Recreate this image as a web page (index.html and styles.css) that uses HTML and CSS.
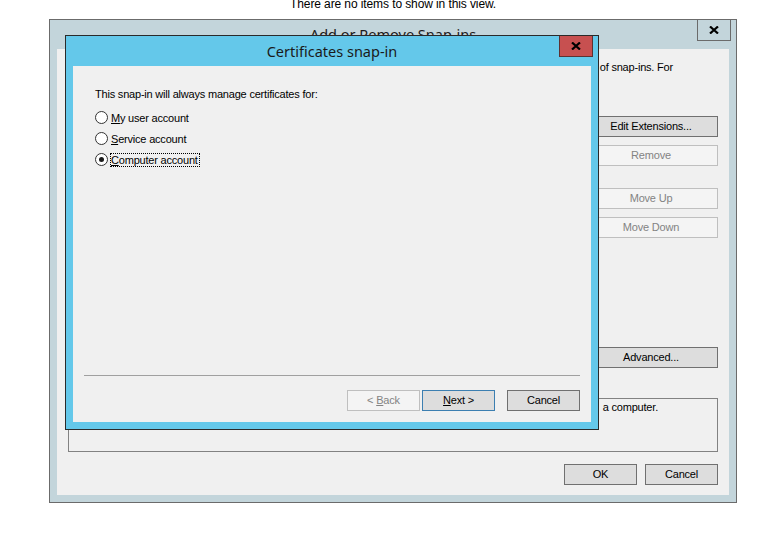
FILE: index.html
```html
<!DOCTYPE html>
<html lang="en">
<head>
<meta charset="utf-8">
<title>Certificates snap-in</title>
<link rel="stylesheet" href="styles.css">
</head>
<body>
<div class="desktop">
  <div class="bgmsg"><span>There are no items to show in this view.</span></div>

  <div class="win outer">
    <div class="titlebar outer-title">
      <span class="title">Add or Remove Snap-ins</span>
      <button class="cap-close" aria-label="Close">
        <svg width="10" height="8" viewBox="0 0 10 8"><path d="M1 0.5 L9 7.5 M9 0.5 L1 7.5" stroke="#000" stroke-width="2.2" fill="none"/></svg>
      </button>
    </div>
    <div class="client outer-client">
      <div class="intro">
        <span class="intro-l1">of snap-ins. For</span>
      </div>
      <div class="middle">
        <div class="lists">
          <div class="listbox"></div>
          <div class="listbox"></div>
        </div>
        <div class="side">
          <button class="btn">Edit Extensions...</button>
          <button class="btn gap8" disabled>Remove</button>
          <button class="btn gap22" disabled>Move Up</button>
          <button class="btn gap8" disabled>Move Down</button>
          <button class="btn push">Advanced...</button>
        </div>
      </div>
      <div class="desc">
        <span class="desc-text">a computer.</span>
      </div>
      <div class="footer">
        <button class="btn">OK</button>
        <button class="btn">Cancel</button>
      </div>
    </div>
  </div>

  <div class="win dialog">
    <div class="titlebar dlg-title">
      <span class="title">Certificates snap-in</span>
      <button class="cap-close red" aria-label="Close">
        <svg width="10" height="8" viewBox="0 0 10 8"><path d="M1 0.5 L9 7.5 M9 0.5 L1 7.5" stroke="#000" stroke-width="2.2" fill="none"/></svg>
      </button>
    </div>
    <div class="client dlg-client">
      <div class="content">
        <div class="prompt">This snap-in will always manage certificates for:</div>
        <div class="radios">
          <label class="radio"><span class="circle"></span><span class="lbl"><u>M</u>y user account</span></label>
          <label class="radio"><span class="circle"></span><span class="lbl"><u>S</u>ervice account</span></label>
          <label class="radio"><span class="circle checked"></span><span class="lbl focus"><u>C</u>omputer account</span></label>
        </div>
      </div>
      <div class="sep"></div>
      <div class="buttons">
        <button class="btn" disabled>&lt; <u>B</u>ack</button>
        <button class="btn default"><u>N</u>ext &gt;</button>
        <button class="btn cancel">Cancel</button>
      </div>
    </div>
  </div>
</div>
</body>
</html>
```

FILE: styles.css
```css
* { box-sizing: border-box; }
html, body { margin: 0; padding: 0; }
body {
  background: #ffffff;
  font-family: "Liberation Sans", Arial, sans-serif;
  font-size: 11px;
  letter-spacing: -0.2px;
  color: #000;
  width: 765px;
  height: 553px;
  overflow: hidden;
}
.desktop { position: relative; width: 765px; height: 553px; }

.bgmsg { height: 19px; overflow: hidden; padding-left: 290px; }
.bgmsg span { display: block; margin-top: -2px; line-height: 13px; font-size: 12px; letter-spacing: -0.1px; white-space: nowrap; }

/* windows */
.win { display: flex; flex-direction: column; }
.titlebar {
  display: grid;
  grid-template-columns: 1fr auto 1fr;
  align-items: start;
}
.title {
  grid-column: 2;
  font-family: "Noto Sans", "Open Sans", sans-serif;
  font-size: 14.5px;
  letter-spacing: 0;
  color: #1a1a1a;
  white-space: nowrap;
}
.cap-close {
  grid-column: 3;
  justify-self: end;
  width: 34px;
  height: 21px;
  margin: 0 5px 0 0;
  padding: 0;
  background: transparent;
  border: 1px solid #6b6b6b;
  border-top: none;
  display: flex;
  align-items: center;
  justify-content: center;
}
.cap-close svg { display: block; }
.cap-close.red { background: #c75050; border-color: #5e3131; }

.outer {
  margin-left: 49px;
  width: 688px;
  height: 484px;
  border: 1px solid #6b6b6b;
  background: #c3d5db;
}
.outer-title { height: 29px; }
.outer-title .title { line-height: 28px; }
.client { background: #f0f0f0; }
.outer-client {
  flex: 1;
  margin: 0 7px 7px;
  padding: 0 11px;
  display: flex;
  flex-direction: column;
}
.intro { margin-top: 12px; line-height: 13px; height: 26px; display: flex; justify-content: flex-end; padding-right: 45px; }
.intro-l1 { white-space: nowrap; }
.middle { display: flex; gap: 8px; margin-top: 29px; }
.lists { flex: 1; display: flex; gap: 60px; }
.listbox { flex: 1; height: 252px; border: 1px solid #828282; background: #fff; }
.side { width: 134px; display: flex; flex-direction: column; }
.side .btn { width: 100%; }
.gap8 { margin-top: 8px; }
.gap22 { margin-top: 22px; }
.push { margin-top: 109px; }
.desc {
  margin-top: 30px;
  height: 54px;
  border: 1px solid #828282;
  padding: 2px 59px 0 0;
  display: flex;
  justify-content: flex-end;
  align-items: flex-start;
  line-height: 13px;
}
.desc-text { white-space: nowrap; }
.footer { margin-top: 12px; display: flex; justify-content: flex-end; gap: 8px; }

/* buttons */
.btn {
  width: 73px;
  height: 21px;
  padding: 0;
  border: 1px solid #707070;
  background: #dddddd;
  font: inherit;
  letter-spacing: inherit;
  color: #000;
  line-height: 19px;
  text-align: center;
}
.btn:disabled { border-color: #bfbfbf; background: #f4f4f4; color: #838383; }
.btn.default { border-color: #3c7fb1; }

/* dialog */
.dialog {
  position: absolute;
  left: 65px;
  top: 35px;
  width: 534px;
  height: 395px;
  border: 1px solid #2a2a2a;
  background: #64c8ea;
}
.dlg-title { height: 30px; }
.dlg-title .title { line-height: 30px; }
.dlg-client {
  flex: 1;
  margin: 0 7px 7px;
  padding: 22px 11px 11px;
  display: flex;
  flex-direction: column;
}
.content { flex: 1; padding-left: 11px; }
.prompt { line-height: 13px; }
.radios { margin-top: 6px; }
.radio { display: flex; align-items: center; height: 21px; gap: 2px; }
.circle {
  width: 13px;
  height: 13px;
  border: 1px solid #333;
  border-radius: 50%;
  background: #fff;
  display: flex;
  align-items: center;
  justify-content: center;
}
.circle.checked::after {
  content: "";
  width: 5px;
  height: 5px;
  border-radius: 50%;
  background: #1a1a1a;
}
.lbl { border: 1px dotted transparent; line-height: 12px; padding-right: 1px; }
.lbl.focus { border-color: #000; }
.sep { height: 1px; background: #a0a0a0; }
.buttons { margin-top: 14px; display: flex; justify-content: flex-end; }
.buttons .btn.default { margin-left: 2px; }
.buttons .btn.cancel { margin-left: 12px; }
```
